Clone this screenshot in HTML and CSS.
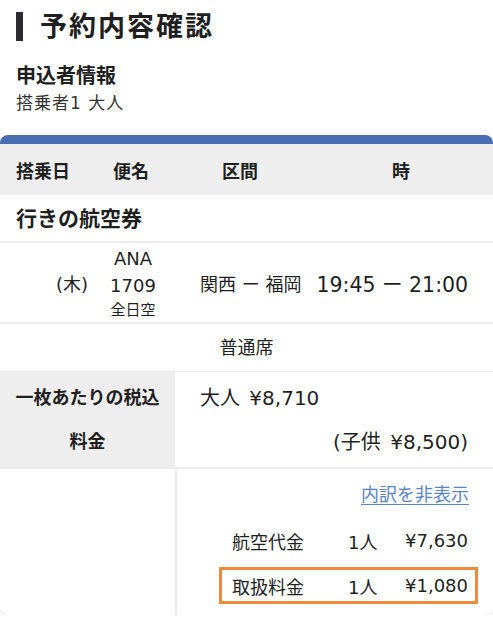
FILE: index.html
```html
<!DOCTYPE html>
<html lang="ja">
<head>
    <meta charset="UTF-8">
    <meta name="viewport" content="width=device-width, initial-scale=1.0">
    <title>予約内容確認</title>
    <link rel="stylesheet" href="styles.css">
</head>
<body>

<div class="page">
    <h1 class="page-title">予約内容確認</h1>

    <div class="applicant">
        <h2>申込者情報</h2>
        <p>搭乗者1 大人</p>
    </div>

    <div class="card">
        <div class="head-row">
            <span class="h-date">搭乗日</span>
            <span class="h-flight">便名</span>
            <span class="h-route">区間</span>
            <span class="h-time">時</span>
        </div>

        <div class="section-title">行きの航空券</div>

        <div class="flight-row">
            <div class="day">(木)</div>
            <div class="flight-no">
                <span>ANA</span>
                <span>1709</span>
                <span class="carrier">全日空</span>
            </div>
            <div class="route">関西 ー 福岡</div>
            <div class="time">19:45 ー 21:00</div>
        </div>

        <div class="seat-row">普通席</div>

        <div class="fare-row">
            <div class="fare-label">一枚あたりの税込料金</div>
            <div class="fare-value">
                <div class="adult">大人 ¥8,710</div>
                <div class="child">(子供 ¥8,500)</div>
            </div>
        </div>

        <div class="detail-row">
            <div class="detail-blank"></div>
            <div class="detail-body">
                <div class="toggle"><a href="#">内訳を非表示</a></div>
                <div class="line">
                    <span>航空代金</span>
                    <span>1人</span>
                    <span class="price">¥7,630</span>
                </div>
                <div class="line highlight">
                    <span>取扱料金</span>
                    <span>1人</span>
                    <span class="price">¥1,080</span>
                </div>
            </div>
        </div>
    </div>
</div>

</body>
</html>
```

FILE: styles.css
```css
body {
    font-family: "DejaVu Sans", "Noto Sans CJK JP", sans-serif;
    color: #1f1f1f;
    background: #fff;
    margin: 0;
}
.page {
    padding-top: 12px;
}
.page-title {
    margin: 0 16px;
    height: 29px;
    line-height: 29px;
    border-left: 7px solid #2b2b30;
    padding-left: 17px;
    font-size: 27px;
    font-weight: 700;
    letter-spacing: 2px;
}
.applicant {
    margin: 22px 16px 0;
}
.applicant h2 {
    margin: 0;
    font-size: 20px;
    line-height: 26px;
    font-weight: 700;
}
.applicant p {
    margin: 2px 0 0;
    font-size: 17px;
    line-height: 24px;
    letter-spacing: 1px;
    color: #333;
}
.card {
    margin-top: 20px;
    border-top: 9px solid #4b6db1;
    border-radius: 8px;
    box-shadow: 0 1px 3px rgba(0, 0, 0, 0.12);
    overflow: hidden;
}
.head-row {
    display: flex;
    align-items: center;
    height: 51px;
    padding-left: 16px;
    background: #eeeeee;
    font-size: 18px;
    font-weight: 700;
}
.h-date { width: 97px; }
.h-flight { width: 109px; }
.h-route { width: 170px; }
.section-title {
    height: 46px;
    line-height: 48px;
    padding-left: 16px;
    font-size: 21px;
    font-weight: 700;
    border-bottom: 2px solid #ececec;
}
.flight-row {
    display: flex;
    align-items: center;
    height: 79px;
    border-bottom: 2px solid #ececec;
    font-size: 18px;
}
.day {
    width: 88px;
    text-align: right;
}
.flight-no {
    display: flex;
    flex-direction: column;
    align-items: center;
    width: 46px;
    margin-left: 22px;
    line-height: 27px;
}
.carrier {
    font-size: 15px;
    line-height: 22px;
}
.route {
    margin-left: 44px;
}
.time {
    margin-left: 15px;
    font-size: 20.5px;
}
.seat-row {
    height: 47px;
    line-height: 47px;
    text-align: center;
    font-size: 18px;
    border-bottom: 1px solid #ececec;
}
.fare-row {
    display: flex;
    border-bottom: 2px solid #ececec;
}
.fare-label {
    width: 159px;
    padding: 4px 8px 3px;
    background: #eeeeee;
    text-align: center;
    font-size: 18px;
    font-weight: 700;
    line-height: 44px;
}
.fare-value {
    flex: 1;
    padding: 4px 25px 3px;
    font-size: 20px;
    line-height: 44px;
    word-spacing: 3px;
}
.child {
    text-align: right;
}
.detail-row {
    display: flex;
}
.detail-blank {
    width: 175px;
    border-right: 2px solid #ececec;
}
.detail-body {
    flex: 1;
    padding: 13px 15px 11px 42px;
}
.toggle {
    text-align: right;
    padding-right: 9px;
    font-size: 18px;
    line-height: 26px;
}
.toggle a {
    color: #5b84c4;
    text-decoration: underline;
    text-underline-offset: 3px;
}
.line {
    display: grid;
    grid-template-columns: 116px 55px 1fr;
    align-items: center;
    height: 37px;
    padding: 0 7px 0 10px;
    border: 3px solid transparent;
    box-sizing: border-box;
    font-size: 18px;
}
.toggle + .line { margin-top: 14px; }
.line + .line { margin-top: 8px; }
.highlight {
    border-color: #f0893c;
}
.price {
    text-align: right;
}
```
